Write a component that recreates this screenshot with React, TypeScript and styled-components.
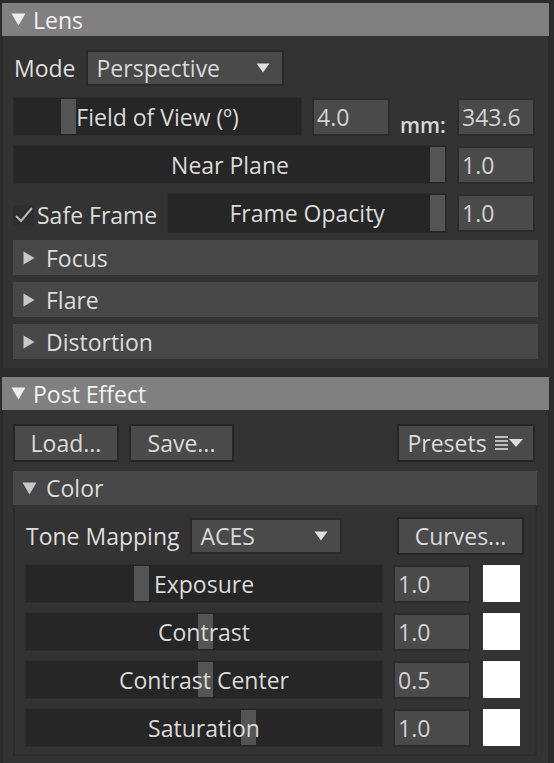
import styled, { createGlobalStyle } from 'styled-components';

const GlobalStyle = createGlobalStyle`
  html, body {
    margin: 0;
    padding: 0;
    background: #2b2b2b;
  }
  body {
    font-family: 'Open Sans', 'Noto Sans', sans-serif;
    font-size: 23px;
    color: #dcdcdc;
  }
`;

const DownArrow = ({ w = 15, h = 13 }: { w?: number; h?: number }) => (
  <svg width={w} height={h} viewBox="0 0 14 12" preserveAspectRatio="none">
    <path d="M0.5 0.5 H13.5 L7 11.5 Z" fill="currentColor" />
  </svg>
);

const RightArrow = () => (
  <svg width="12" height="14" viewBox="0 0 12 14">
    <path d="M0.5 0.5 V13.5 L11.5 7 Z" fill="currentColor" />
  </svg>
);

const Check = () => (
  <svg width="20" height="20" viewBox="0 0 20 20">
    <path d="M2 11 L7 16 L18 3" stroke="#b8b8b8" strokeWidth="2" fill="none" />
  </svg>
);

const PresetsIcon = () => (
  <svg width="30" height="16" viewBox="0 0 30 16">
    <rect x="0" y="1" width="13" height="2" fill="#bdbdbd" />
    <rect x="0" y="5" width="13" height="2" fill="#bdbdbd" />
    <rect x="0" y="9" width="13" height="2" fill="#bdbdbd" />
    <rect x="0" y="13" width="13" height="2" fill="#bdbdbd" />
    <path d="M14 4 H28 L21 12 Z" fill="#dcdcdc" />
  </svg>
);

const Slider = ({ label, value, width }: { label: string; value: number; width?: number }) => (
  <Track $width={width}>
    <Handle style={{ left: `calc(1px + (100% - 17px) * ${value})` }} />
    <TrackLabel>{label}</TrackLabel>
  </Track>
);

const Section = ({ title, children }: { title: string; children: React.ReactNode }) => (
  <Panel>
    <PanelHeader>
      <DownArrow />
      <span>{title}</span>
    </PanelHeader>
    <PanelBody>{children}</PanelBody>
  </Panel>
);

const colorParams = [
  { label: 'Exposure', value: 0.316, num: '1.0' },
  { label: 'Contrast', value: 0.503, num: '1.0' },
  { label: 'Contrast Center', value: 0.503, num: '0.5' },
  { label: 'Saturation', value: 0.632, num: '1.0' },
];

const App = () => {
  return (
    <Page>
      <GlobalStyle />
      <Section title="Lens">
        <Stack>
          <Row $mb={4} $h={36}>
            <Label>Mode</Label>
            <Dropdown $width={198}>
              <span>Perspective</span>
              <DownArrow w={14} h={10} />
            </Dropdown>
          </Row>
          <Row $mb={2}>
            <Slider label="Field of View (º)" value={0.169} width={289} />
            <Field $width={78}>4.0</Field>
            <Unit>mm:</Unit>
            <Field $width={78}>343.6</Field>
          </Row>
          <Row $mb={2}>
            <Slider label="Near Plane" value={1} />
            <Field $width={78}>1.0</Field>
          </Row>
          <Row $h={40}>
            <CheckLabel>
              <CheckBox>
                <Check />
              </CheckBox>
              Safe Frame
            </CheckLabel>
            <Slider label="Frame Opacity" value={1} />
            <Field $width={78}>1.0</Field>
          </Row>
          <Collapsed>
            <RightArrow />
            Focus
          </Collapsed>
          <Collapsed>
            <RightArrow />
            Flare
          </Collapsed>
          <Collapsed>
            <RightArrow />
            Distortion
          </Collapsed>
        </Stack>
      </Section>

      <Section title="Post Effect">
        <Stack>
          <Row $mb={2} $h={38}>
            <Button $width={106}>Load...</Button>
            <Button $width={105}>Save...</Button>
            <Spacer />
            <Button $width={138}>
              Presets
              <PresetsIcon />
            </Button>
          </Row>
          <SubPanel>
            <SubHeader>
              <DownArrow />
              Color
            </SubHeader>
            <SubBody>
              <Row $h={38} $mr={-4}>
                <Label>Tone Mapping</Label>
                <Dropdown $width={152}>
                  <span>ACES</span>
                  <DownArrow w={14} h={10} />
                </Dropdown>
                <Spacer />
                <Button $width={127}>Curves...</Button>
              </Row>
              {colorParams.map((p) => (
                <Row key={p.label}>
                  <Slider label={p.label} value={p.value} />
                  <Field $width={78}>{p.num}</Field>
                  <Swatch />
                </Row>
              ))}
            </SubBody>
          </SubPanel>
        </Stack>
      </Section>
    </Page>
  );
};

export default App;

const Page = styled.div`
  width: 554px;
  height: 763px;
  overflow: hidden;
  box-sizing: border-box;
  padding: 3px 5px 0 2px;
  display: flex;
  flex-direction: column;
  gap: 9px;
`;

const Panel = styled.div`
  display: flex;
  flex-direction: column;
`;

const PanelHeader = styled.div`
  height: 33px;
  flex-shrink: 0;
  background: #808080;
  color: #f2f2f2;
  display: flex;
  align-items: center;
  gap: 7px;
  padding-left: 9px;
  svg {
    color: #ececec;
  }
`;

const PanelBody = styled.div`
  background: #333333;
  border-left: 1px solid #282828;
  border-right: 1px solid #282828;
  padding: 14px 13px 9px 10px;
`;

const Stack = styled.div`
  display: flex;
  flex-direction: column;
  gap: 7px;
`;

const Row = styled.div<{ $mb?: number; $h?: number; $mr?: number }>`
  display: flex;
  align-items: center;
  gap: 10px;
  height: ${({ $h }) => ($h ? `${$h}px` : 'auto')};
  margin-bottom: ${({ $mb }) => $mb ?? 0}px;
  margin-right: ${({ $mr }) => $mr ?? 0}px;
`;

const Label = styled.span`
  color: #dedede;
  padding-left: 1px;
  white-space: nowrap;
`;

const Unit = styled.span`
  align-self: flex-end;
  margin-bottom: -3px;
  width: 47px;
  font-weight: 600;
  font-size: 21px;
  color: #d6d6d6;
`;

const Dropdown = styled.div<{ $width: number }>`
  width: ${({ $width }) => $width}px;
  height: 36px;
  box-sizing: border-box;
  background: #4a4a4a;
  border: 2px solid #292929;
  display: flex;
  align-items: center;
  justify-content: space-between;
  padding: 0 12px 0 9px;
  color: #d8d8d8;
  svg {
    color: #e0e0e0;
  }
`;

const Track = styled.div<{ $width?: number }>`
  position: relative;
  flex: ${({ $width }) => ($width ? `0 0 ${$width}px` : '1 1 0')};
  align-self: stretch;
  min-height: 39px;
  box-sizing: border-box;
  background: #262626;
  border: 1px solid #2c2c2c;
  display: flex;
  align-items: center;
  justify-content: center;
`;

const Handle = styled.div`
  position: absolute;
  top: 1px;
  bottom: 1px;
  width: 15px;
  background: #545454;
`;

const TrackLabel = styled.span`
  position: relative;
  color: #dadada;
  white-space: nowrap;
`;

const Field = styled.div<{ $width: number }>`
  width: ${({ $width }) => $width}px;
  height: 38px;
  box-sizing: border-box;
  background: #4a4a4a;
  border: 2px solid #2c2c2c;
  display: flex;
  align-items: center;
  padding-left: 3px;
  color: #d2d2d2;
  flex-shrink: 0;
`;

const CheckLabel = styled.div`
  display: flex;
  align-items: center;
  gap: 3px;
  white-space: nowrap;
  margin-top: 4px;
`;

const CheckBox = styled.div`
  width: 21px;
  height: 21px;
  background: #2e2e2e;
  display: flex;
  align-items: center;
  justify-content: center;
`;

const Collapsed = styled.div`
  height: 35px;
  background: #474747;
  display: flex;
  align-items: center;
  gap: 11px;
  padding-left: 10px;
  margin-right: -3px;
  color: #dcdcdc;
  svg {
    color: #c8c8c8;
  }
`;

const Button = styled.div<{ $width: number }>`
  width: ${({ $width }) => $width}px;
  height: 38px;
  box-sizing: border-box;
  background: #4a4a4a;
  border: 2px solid #262626;
  display: flex;
  align-items: center;
  justify-content: center;
  gap: 8px;
  color: #dadada;
  flex-shrink: 0;
`;

const Spacer = styled.div`
  flex: 1;
`;

const SubPanel = styled.div`
  display: flex;
  flex-direction: column;
  margin-right: -2px;
`;

const SubHeader = styled.div`
  height: 34px;
  background: #474747;
  display: flex;
  align-items: center;
  gap: 9px;
  padding-left: 9px;
  color: #dcdcdc;
  svg {
    color: #c8c8c8;
  }
`;

const SubBody = styled.div`
  border: 2px solid #2c2c2c;
  border-top: none;
  background: #333333;
  padding: 12px 15px 7px 10px;
  display: flex;
  flex-direction: column;
  gap: 9px;
`;

const Swatch = styled.div`
  width: 37px;
  height: 37px;
  margin-left: 2px;
  background: #ffffff;
  flex-shrink: 0;
`;
